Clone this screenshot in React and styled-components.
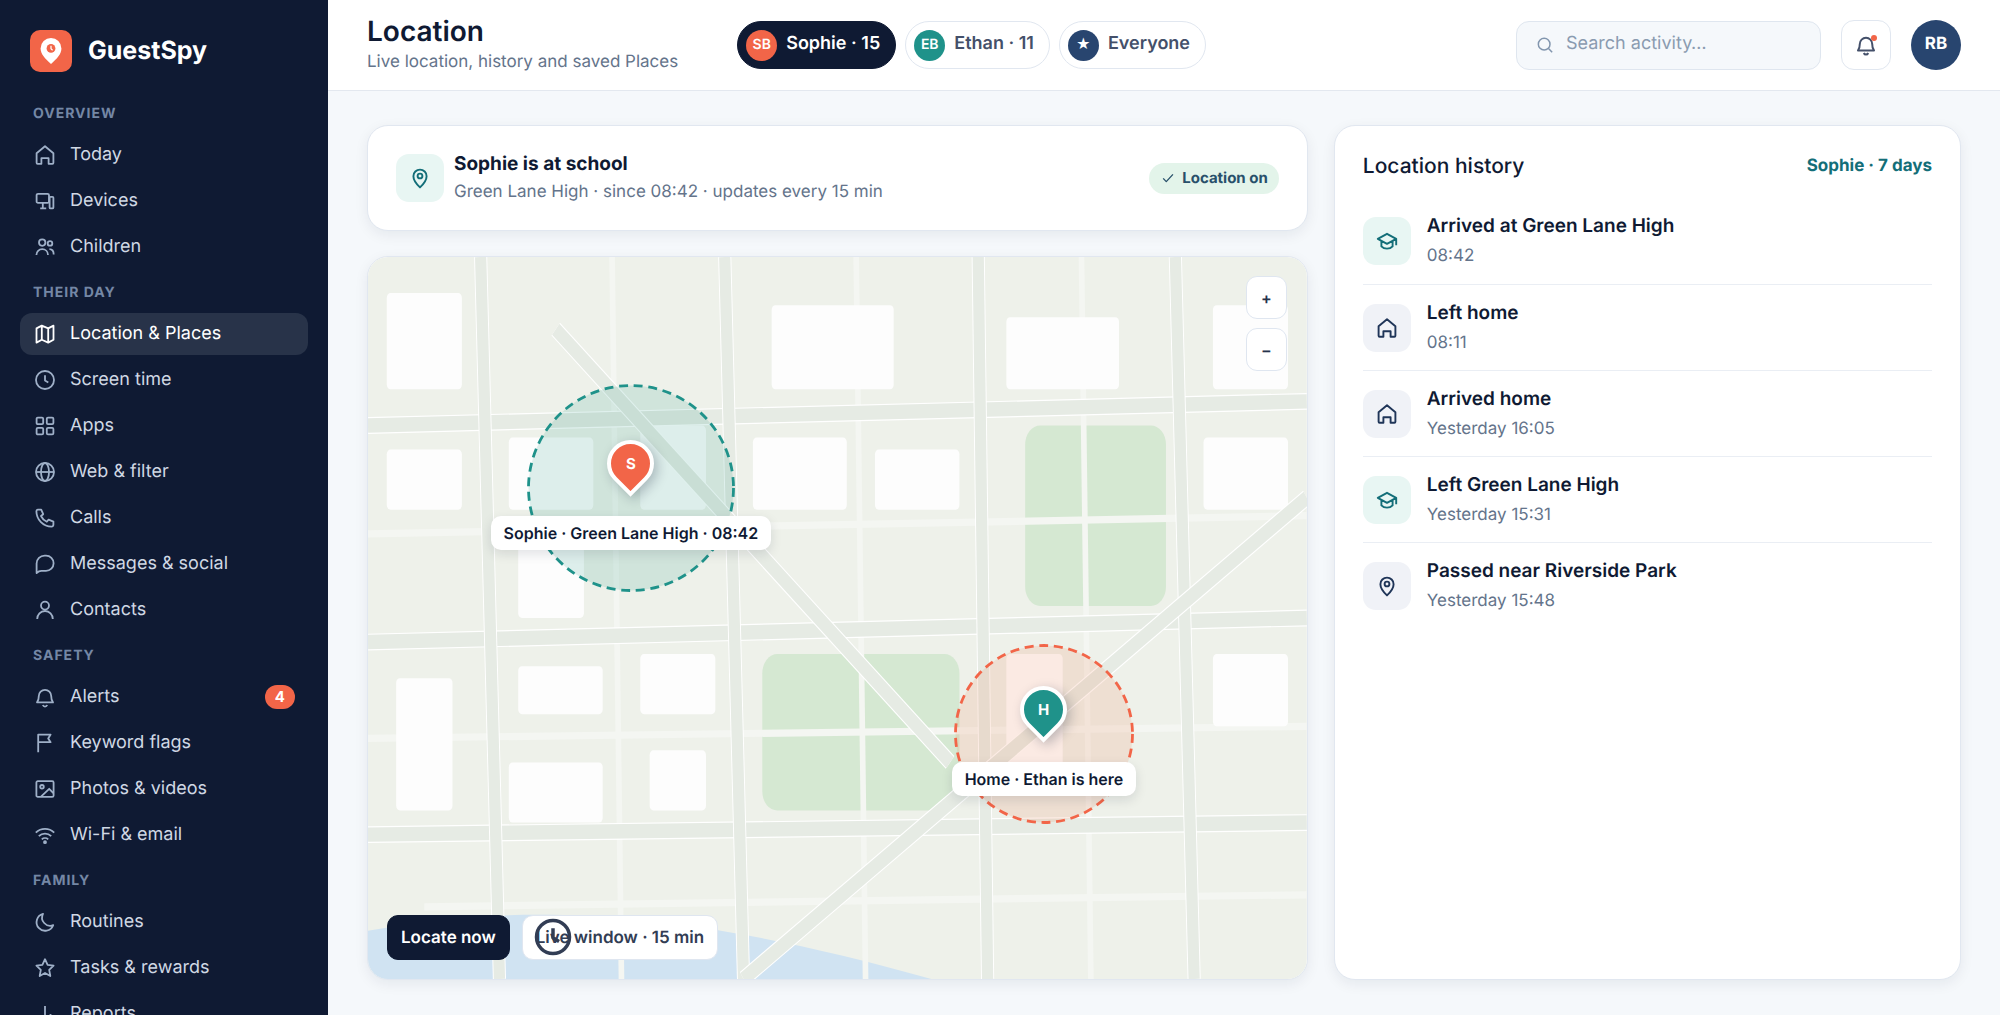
import React, { useState } from "react";
import styled, { createGlobalStyle } from "styled-components";

const GlobalStyle = createGlobalStyle`
  * {
    box-sizing: border-box;
  }
  body {
    margin: 0;
    background: #f5f8fb;
    color: #0f1a33;
    font-family: Inter, "Liberation Sans", sans-serif;
    font-size: 18px;
    text-rendering: geometricPrecision;
  }
  button,
  input {
    font-family: inherit;
    text-rendering: inherit;
  }
  h1,
  h2,
  p,
  ul {
    margin: 0;
    padding: 0;
  }
`;

const icons = {
  home: <path d="M3.6 10.2 12 3.2l8.4 7v9.6a1 1 0 0 1-1 1h-3.8v-5.6H8.4v5.6H4.6a1 1 0 0 1-1-1z" />,
  devices: (
    <>
      <rect x="3.6" y="4.8" width="12.4" height="9" rx="1.4" />
      <path d="M9.8 13.8v5.6M7.2 19.4h6" />
      <rect x="16.6" y="7.8" width="3.8" height="11.6" rx="1" />
    </>
  ),
  users: (
    <>
      <circle cx="9.2" cy="7.6" r="3.2" />
      <circle cx="17" cy="8.4" r="2.3" />
      <path d="M3.4 20c0-3.4 2.6-5.8 5.8-5.8S15 16.6 15 20M16.4 14.2c2.6 0 4.3 2.2 4.3 5.4" />
    </>
  ),
  map: <path d="M3.5 6.4 8.8 3.6l6.4 2.8 5.3-2.8v14.2l-5.3 2.8-6.4-2.8-5.3 2.8zM8.8 3.6v14.2M15.2 6.4v14.2" />,
  clock: (
    <>
      <circle cx="12" cy="12" r="9" />
      <path d="M12 7.2v5.2l3.3 2" />
    </>
  ),
  apps: (
    <>
      <rect x="3.6" y="3.6" width="6.6" height="6.6" rx="1.2" />
      <rect x="13.8" y="3.6" width="6.6" height="6.6" rx="1.2" />
      <rect x="3.6" y="13.8" width="6.6" height="6.6" rx="1.2" />
      <rect x="13.8" y="13.8" width="6.6" height="6.6" rx="1.2" />
    </>
  ),
  globe: (
    <>
      <circle cx="12" cy="12" r="9" />
      <ellipse cx="12" cy="12" rx="4" ry="9" />
      <path d="M3 12h18" />
    </>
  ),
  phone: <path d="M4.8 3.6h3.4l2 4.6-2.2 1.8c1.2 2.6 3.2 4.6 5.8 5.8l1.8-2.2 4.8 2v3.2a1.8 1.8 0 0 1-1.8 1.8C10.4 20.6 3.4 13.6 3.4 5.2a1.6 1.6 0 0 1 1.4-1.6z" />,
  message: <path d="M3.6 21v-9.4a8 8 0 0 1 8-8h1.4a7.6 7.6 0 0 1 0 15.2H8.4c-1.8 0-3.4.8-4.8 2.2z" />,
  user: (
    <>
      <circle cx="12" cy="7.6" r="4" />
      <path d="M4.2 21c0-4.6 3.4-8 7.8-8s7.8 3.4 7.8 8" />
    </>
  ),
  bell: <path d="M4 17.4h16c-1.4-1.6-1.8-3-1.8-6.4a6.2 6.2 0 0 0-12.4 0c0 3.4-.4 4.8-1.8 6.4zM9.8 20c.5 1.2 1.2 1.6 2.2 1.6s1.7-.4 2.2-1.6" />,
  flag: <path d="M5.2 21.2V3.6h12.4l-2.4 3.8 2.4 3.8H5.2" />,
  image: (
    <>
      <rect x="3.4" y="4.2" width="17.2" height="15.6" rx="1.4" />
      <circle cx="9" cy="9.8" r="1.8" />
      <path d="m8 19.6 8.2-7.8 4.2 4.4" />
    </>
  ),
  wifi: (
    <>
      <path d="M2.8 9.6a13.4 13.4 0 0 1 18.4 0M5.8 13.2a9 9 0 0 1 12.4 0M8.8 16.4a4.7 4.7 0 0 1 6.4 0" />
      <circle cx="12" cy="19.2" r="1" />
    </>
  ),
  moon: <path d="M10 3.8a8.6 8.6 0 1 0 10.2 11.4A8.2 8.2 0 0 1 10 3.8z" />,
  star: <path d="m12 3.2 2.6 5.6 6 .8-4.4 4.2 1.1 6.2-5.3-3-5.3 3 1.1-6.2-4.4-4.2 6-.8z" />,
  chart: <path d="M6.5 20v-6M12 20V4M17.5 20v-8" />,
  search: (
    <>
      <circle cx="11" cy="11" r="7" />
      <path d="m16.2 16.2 4.4 4.4" />
    </>
  ),
  pin: (
    <>
      <path d="M12 21.4c-4.2-4-6.6-7.6-6.6-11.2a6.6 6.6 0 0 1 13.2 0c0 3.6-2.4 7.2-6.6 11.2z" />
      <circle cx="12" cy="10" r="2.4" />
    </>
  ),
  check: <path d="m4.8 12.6 4.6 4.8L19.4 6.6" />,
  school: <path d="m2.8 9.8 9.2-5 9.2 5-9.2 5zM6.4 12v5.4c2.8 3 8.4 3 11.2 0V12M21.2 9.8v6.4" />,
};

function Icon({ name, size = 24, weight = 1.8 }) {
  return (
    <svg width={size} height={size} viewBox="0 0 24 24" fill="none" stroke="currentColor" strokeWidth={weight} strokeLinejoin="round" aria-hidden="true">
      {icons[name]}
    </svg>
  );
}

const menu = [
  {
    title: "Overview",
    items: [
      { icon: "home", label: "Today" },
      { icon: "devices", label: "Devices" },
      { icon: "users", label: "Children" },
    ],
  },
  {
    title: "Their day",
    items: [
      { icon: "map", label: "Location & Places", active: true },
      { icon: "clock", label: "Screen time" },
      { icon: "apps", label: "Apps" },
      { icon: "globe", label: "Web & filter" },
      { icon: "phone", label: "Calls" },
      { icon: "message", label: "Messages & social" },
      { icon: "user", label: "Contacts" },
    ],
  },
  {
    title: "Safety",
    items: [
      { icon: "bell", label: "Alerts", count: 4 },
      { icon: "flag", label: "Keyword flags" },
      { icon: "image", label: "Photos & videos" },
      { icon: "wifi", label: "Wi-Fi & email" },
    ],
  },
  {
    title: "Family",
    items: [
      { icon: "moon", label: "Routines" },
      { icon: "star", label: "Tasks & rewards" },
      { icon: "chart", label: "Reports" },
    ],
  },
];

const people = [
  { id: "sophie", initials: "SB", label: "Sophie · 15", color: "#f26548" },
  { id: "ethan", initials: "EB", label: "Ethan · 11", color: "#1f928a" },
  { id: "all", initials: "★", label: "Everyone", color: "#28456f" },
];

const history = [
  { icon: "school", title: "Arrived at Green Lane High", time: "08:42" },
  { icon: "home", title: "Left home", time: "08:11" },
  { icon: "home", title: "Arrived home", time: "Yesterday 16:05" },
  { icon: "school", title: "Left Green Lane High", time: "Yesterday 15:31" },
  { icon: "pin", title: "Passed near Riverside Park", time: "Yesterday 15:48" },
];

// x, y, width, height in map units
const parks = [
  [700, 140, 150, 150],
  [420, 330, 210, 130],
];

const buildings = [
  [20, 30, 80, 80],
  [430, 40, 130, 70],
  [680, 50, 120, 60],
  [900, 40, 80, 70],
  [20, 160, 80, 50],
  [150, 150, 90, 60],
  [290, 140, 70, 70],
  [410, 150, 100, 60],
  [540, 160, 90, 50],
  [890, 150, 90, 60],
  [160, 240, 70, 60],
  [30, 350, 60, 110],
  [160, 340, 90, 40],
  [290, 330, 80, 50],
  [150, 420, 100, 50],
  [300, 410, 60, 50],
  [680, 330, 60, 100],
  [900, 330, 80, 60],
];

const lanes = [
  "M0 230 1000 215",
  "M0 400 1000 390",
  "M60 540 1000 530",
  "M260 0 270 600",
  "M520 0 530 600",
  "M760 0 770 600",
];

const roads = [
  "M0 140 1000 120",
  "M0 320 1000 300",
  "M0 480 1000 470",
  "M120 0 140 600",
  "M380 0 400 600",
  "M650 0 660 600",
  "M860 0 880 600",
  "M200 60 620 420",
  "M1000 200 400 600",
];

function StreetMap() {
  return (
    <MapDrawing viewBox="0 0 1000 600" preserveAspectRatio="none" role="img" aria-label="Street map">
      <rect width="1000" height="600" fill="#eef1ea" />
      <path d="M0 560C150 538 320 538 600 600H0z" fill="#d0e3f2" />
      {parks.map(([x, y, w, h]) => (
        <rect key={x} x={x} y={y} width={w} height={h} rx="16" fill="#d5e8d2" />
      ))}
      {lanes.map((d) => (
        <path key={d} d={d} stroke="#f4f6f2" strokeWidth="6" />
      ))}
      {buildings.map(([x, y, w, h]) => (
        <rect key={`${x}-${y}`} x={x} y={y} width={w} height={h} rx="4" fill="#fdfdfd" />
      ))}
      {roads.map((d) => (
        <g key={d}>
          <path d={d} stroke="#ffffff" strokeWidth="14" />
          <path d={d} stroke="#e6ebe4" strokeWidth="12" />
        </g>
      ))}
    </MapDrawing>
  );
}

function Place({ x, y, size, color, fill, pinColor, letter, label }) {
  return (
    <PlaceSpot $x={x} $y={y} $size={size}>
      <Zone viewBox={`0 0 ${size} ${size}`} aria-hidden="true">
        <circle cx={size / 2} cy={size / 2} r={size / 2 - 1.5} fill={fill} stroke={color} strokeWidth="2.8" strokeDasharray="9 5.7" />
      </Zone>
      <Pin $color={pinColor}>
        <span>{letter}</span>
      </Pin>
      <PlaceLabel>{label}</PlaceLabel>
    </PlaceSpot>
  );
}

function Sidebar() {
  return (
    <Aside>
      <Brand href="#">
        <svg width="42" height="42" viewBox="0 0 42 42" aria-hidden="true">
          <rect width="42" height="42" rx="10" fill="#f26548" />
          <path d="M21 34c-6-5.6-10.4-10-10.4-15.6a10.4 10.4 0 0 1 20.8 0C31.4 24 27 28.4 21 34z" fill="#fff" />
          <circle cx="21" cy="18.4" r="4.4" fill="#f26548" />
          <path d="M21 15.8v3l1.6 1.4" fill="none" stroke="#fff" strokeWidth="1.2" />
        </svg>
        GuestSpy
      </Brand>
      <nav>
        {menu.map((group) => (
          <div key={group.title}>
            <GroupTitle>{group.title}</GroupTitle>
            <GroupList>
              {group.items.map((item) => (
                <li key={item.label}>
                  <NavLink href="#" $active={item.active}>
                    <Icon name={item.icon} />
                    <span>{item.label}</span>
                    {item.count && <Count>{item.count}</Count>}
                  </NavLink>
                </li>
              ))}
            </GroupList>
          </div>
        ))}
      </nav>
    </Aside>
  );
}

function Topbar() {
  const [person, setPerson] = useState("sophie");
  return (
    <Header>
      <Heading>
        <Title>Location</Title>
        <Subtitle>Live location, history and saved Places</Subtitle>
      </Heading>
      <People>
        {people.map((p) => (
          <PersonButton key={p.id} $active={p.id === person} onClick={() => setPerson(p.id)}>
            <Initials $color={p.color}>{p.initials}</Initials>
            <span>{p.label}</span>
          </PersonButton>
        ))}
      </People>
      <Search>
        <Icon name="search" size={20} />
        <input type="search" aria-label="Search activity" placeholder="Search activity…" />
      </Search>
      <BellButton aria-label="Notifications">
        <Icon name="bell" size={24} weight={2} />
        <Dot />
      </BellButton>
      <Account aria-label="Account">RB</Account>
    </Header>
  );
}

export default function App() {
  return (
    <Shell>
      <GlobalStyle />
      <Sidebar />
      <Page>
        <Topbar />
        <Content>
          <Column>
            <StatusCard>
              <IconTile $tone="teal">
                <Icon name="pin" size={24} weight={1.9} />
              </IconTile>
              <StatusText>
                <StatusTitle>Sophie is at school</StatusTitle>
                <ItemNote>Green Lane High · since 08:42 · updates every 15 min</ItemNote>
              </StatusText>
              <Badge>
                <Icon name="check" size={16} weight={2} />
                <span>Location on</span>
              </Badge>
            </StatusCard>
            <MapCard>
              <StreetMap />
              <Place
                x={28}
                y={32}
                size={208}
                color="#1f928a"
                fill="rgba(31, 146, 128, 0.14)"
                pinColor="#f26548"
                letter="S"
                label="Sophie · Green Lane High · 08:42"
              />
              <Place
                x={72}
                y={66}
                size={180}
                color="#f26548"
                fill="rgba(242, 106, 56, 0.13)"
                pinColor="#1f928a"
                letter="H"
                label="Home · Ethan is here"
              />
              <ZoomControls>
                <ZoomButton aria-label="Zoom in">+</ZoomButton>
                <ZoomButton aria-label="Zoom out">−</ZoomButton>
              </ZoomControls>
              <MapActions>
                <MapButton $dark>Locate now</MapButton>
                <MapButton>
                  <ButtonIcon>
                    <Icon name="clock" size={44} weight={1.9} />
                  </ButtonIcon>
                  Live window · 15 min
                </MapButton>
              </MapActions>
            </MapCard>
          </Column>
          <HistoryCard>
            <HistoryHead>
              <HistoryTitle>Location history</HistoryTitle>
              <HistoryLink href="#">Sophie · 7 days</HistoryLink>
            </HistoryHead>
            <ul>
              {history.map((item) => (
                <HistoryRow key={item.title}>
                  <IconTile $tone={item.icon === "school" ? "teal" : "navy"}>
                    <Icon name={item.icon} size={24} weight={1.9} />
                  </IconTile>
                  <HistoryText>
                    <ItemTitle>{item.title}</ItemTitle>
                    <ItemNote>{item.time}</ItemNote>
                  </HistoryText>
                </HistoryRow>
              ))}
            </ul>
          </HistoryCard>
        </Content>
      </Page>
    </Shell>
  );
}

const Shell = styled.div`
  display: flex;
  min-height: 100vh;
`;

const Aside = styled.aside`
  position: sticky;
  top: 0;
  flex: 0 0 328px;
  height: 100vh;
  overflow: hidden;
  padding: 30px 20px 0;
  background: #0f1a33;
`;

const Brand = styled.a`
  display: flex;
  align-items: center;
  gap: 16px;
  margin-bottom: 17px;
  padding-left: 10px;
  color: #ffffff;
  font-size: 25px;
  font-weight: 700;
  text-decoration: none;
`;

const GroupTitle = styled.h2`
  padding: 17px 13px 12px;
  color: #7487a5;
  font-size: 14px;
  font-weight: 700;
  letter-spacing: 1px;
  line-height: 16px;
  text-transform: uppercase;
`;

const GroupList = styled.ul`
  display: flex;
  flex-direction: column;
  gap: 4px;
  list-style: none;
`;

const NavLink = styled.a`
  display: flex;
  align-items: center;
  gap: 13px;
  height: 42px;
  padding: 0 13px;
  border-radius: 12px;
  background: ${(props) => (props.$active ? "#283349" : "transparent")};
  color: ${(props) => (props.$active ? "#ffffff" : "#d0d8e4")};
  text-decoration: none;

  svg {
    color: ${(props) => (props.$active ? "#ffffff" : "#9fb0c8")};
  }

  span {
    padding-bottom: 2px;
  }
`;

const Count = styled.b`
  margin-left: auto;
  padding: 0 10px;
  border-radius: 12px;
  background: #f26548;
  color: #ffffff;
  font-size: 15px;
  line-height: 24px;
`;

const Page = styled.div`
  display: flex;
  flex: 1;
  flex-direction: column;
  min-width: 0;
`;

const Header = styled.header`
  display: flex;
  align-items: center;
  gap: 20px;
  height: 91px;
  padding: 0 39px;
  border-bottom: 1px solid #e3e8ef;
  background: #ffffff;
`;

const Heading = styled.div`
  padding-bottom: 1px;
`;

const Title = styled.h1`
  font-size: 28px;
  font-weight: 600;
  line-height: 36px;
`;

const Subtitle = styled.p`
  color: #64748b;
  font-size: 17px;
  line-height: 27px;
`;

const People = styled.div`
  display: flex;
  gap: 9px;
  margin: 0 auto 0 39px;
`;

const PersonButton = styled.button`
  display: flex;
  align-items: center;
  gap: 9px;
  height: 48px;
  padding: 0 15px 0 8px;
  border: 1px solid ${(props) => (props.$active ? "#0f1a33" : "#e1e7f0")};
  border-radius: 24px;
  background: ${(props) => (props.$active ? "#0f1a33" : "#ffffff")};
  color: ${(props) => (props.$active ? "#ffffff" : "#44506a")};
  font-size: 18px;
  font-weight: 600;

  > span:last-child {
    padding-bottom: 4px;
  }
`;

const Initials = styled.span`
  width: 31px;
  height: 31px;
  border-radius: 50%;
  background: ${(props) => props.$color};
  color: #ffffff;
  font-size: 14px;
  line-height: 29px;
  text-align: center;
`;

const Search = styled.label`
  display: flex;
  align-items: center;
  gap: 11px;
  width: 305px;
  height: 49px;
  padding: 0 18px;
  border: 1px solid #dfe6ef;
  border-radius: 13px;
  background: #f5f8fb;
  color: #8296ae;

  input {
    flex: 1;
    min-width: 0;
    padding: 0 0 3px;
    border: 0;
    outline: 0;
    background: none;
    font-size: 18px;
  }

  input::placeholder {
    color: #8a9bb0;
  }
`;

const BellButton = styled.button`
  position: relative;
  display: grid;
  place-items: center;
  width: 50px;
  height: 50px;
  border: 1px solid #e1e7f0;
  border-radius: 13px;
  background: #ffffff;
  color: #44506a;
`;

const Dot = styled.i`
  position: absolute;
  top: 14px;
  right: 13px;
  width: 6px;
  height: 6px;
  border-radius: 50%;
  background: #f26548;
`;

const Account = styled.button`
  width: 50px;
  height: 50px;
  padding: 0 0 3px;
  border: 0;
  border-radius: 50%;
  background: #28456f;
  color: #ffffff;
  font-size: 17px;
  font-weight: 700;
`;

const Content = styled.main`
  display: grid;
  grid-template-columns: minmax(0, 3fr) minmax(0, 2fr);
  flex: 1;
  gap: 26px;
  padding: 34px 39px 35px;
`;

const Column = styled.div`
  display: flex;
  flex-direction: column;
  gap: 25px;
`;

const Card = styled.section`
  border: 1px solid #e1e7f0;
  border-radius: 21px;
  background: #ffffff;
  box-shadow: 0 4px 14px rgba(15, 26, 51, 0.07);
`;

const StatusCard = styled(Card)`
  display: flex;
  align-items: center;
  gap: 10px;
  padding: 24px 28px;
`;

const StatusText = styled.div`
  flex: 1;
`;

const IconTile = styled.span`
  display: grid;
  flex: none;
  place-items: center;
  width: 48px;
  height: 48px;
  border-radius: 13px;
  background: ${(props) => (props.$tone === "teal" ? "#e8f6f3" : "#f0f2f7")};
  color: ${(props) => (props.$tone === "teal" ? "#136e78" : "#1f3558")};
`;

const ItemTitle = styled.p`
  font-size: 19px;
  font-weight: 600;
  line-height: 28px;
`;

const StatusTitle = styled(ItemTitle)`
  font-weight: 700;
`;

const ItemNote = styled.p`
  color: #64748b;
  font-size: 17px;
  line-height: 28px;
`;

const Badge = styled.span`
  display: flex;
  align-items: center;
  gap: 6px;
  height: 31px;
  padding: 0 11px;
  border-radius: 16px;
  background: #e3f4ea;
  color: #28506a;
  font-size: 15px;
  font-weight: 700;

  span {
    padding-bottom: 1px;
  }
`;

const MapCard = styled(Card)`
  position: relative;
  flex: 1;
  min-height: 600px;
  overflow: hidden;
`;

const MapDrawing = styled.svg`
  position: absolute;
  inset: 0;
  width: 100%;
  height: 100%;
`;

const PlaceSpot = styled.div`
  position: absolute;
  top: ${(props) => props.$y}%;
  left: ${(props) => props.$x}%;
  display: grid;
  place-items: center;
  width: ${(props) => props.$size}px;
  height: ${(props) => props.$size}px;
  transform: translate(-50%, -50%);
`;

const Zone = styled.svg`
  position: absolute;
  inset: 0;
`;

const Pin = styled.div`
  position: absolute;
  top: calc(50% - 48px);
  display: grid;
  place-items: center;
  width: 47px;
  height: 47px;
  border: 4px solid #ffffff;
  border-radius: 50% 50% 50% 0;
  background: ${(props) => props.$color};
  box-shadow: 0 5px 12px rgba(15, 26, 51, 0.25);
  color: #ffffff;
  font-size: 15px;
  font-weight: 700;
  transform: rotate(-45deg);

  span {
    transform: rotate(45deg);
  }
`;

const PlaceLabel = styled.div`
  position: absolute;
  top: calc(50% + 28px);
  padding: 0 13px;
  border-radius: 10px;
  background: #ffffff;
  box-shadow: 0 4px 12px rgba(15, 26, 51, 0.12);
  font-size: 16px;
  font-weight: 600;
  line-height: 34px;
  white-space: nowrap;
`;

const ZoomControls = styled.div`
  position: absolute;
  top: 19px;
  right: 20px;
  display: flex;
  flex-direction: column;
  gap: 9px;
`;

const ZoomButton = styled.button`
  width: 41px;
  height: 43px;
  border: 1px solid #dfe6f0;
  border-radius: 11px;
  background: #ffffff;
  color: #26324b;
  font-size: 16px;
  font-weight: 600;
`;

const MapActions = styled.div`
  position: absolute;
  bottom: 19px;
  left: 19px;
  display: flex;
  gap: 12px;
`;

const MapButton = styled.button`
  position: relative;
  height: 45px;
  padding: 0 13px;
  border: 1px solid ${(props) => (props.$dark ? "#0f1a33" : "#dfe6f0")};
  border-radius: 11px;
  background: ${(props) => (props.$dark ? "#0f1a33" : "#ffffff")};
  color: ${(props) => (props.$dark ? "#ffffff" : "#323d54")};
  font-size: 17px;
  font-weight: 600;
`;

const ButtonIcon = styled.span`
  position: absolute;
  top: -1px;
  left: 8px;

  svg {
    display: block;
  }
`;

const HistoryCard = styled(Card)`
  padding: 20px 28px;
`;

const HistoryHead = styled.div`
  display: flex;
  align-items: center;
  justify-content: space-between;
  height: 40px;
  margin-bottom: 12px;
`;

const HistoryTitle = styled.h2`
  font-size: 21px;
  font-weight: 500;
`;

const HistoryLink = styled.a`
  color: #136e78;
  font-size: 17px;
  font-weight: 700;
  text-decoration: none;
`;

const HistoryRow = styled.li`
  display: flex;
  align-items: center;
  gap: 16px;
  height: 86px;
  list-style: none;

  & + & {
    border-top: 1px solid #eaeef4;
  }
`;

const HistoryText = styled.div`
  display: flex;
  flex-direction: column;
  gap: 2px;
`;
